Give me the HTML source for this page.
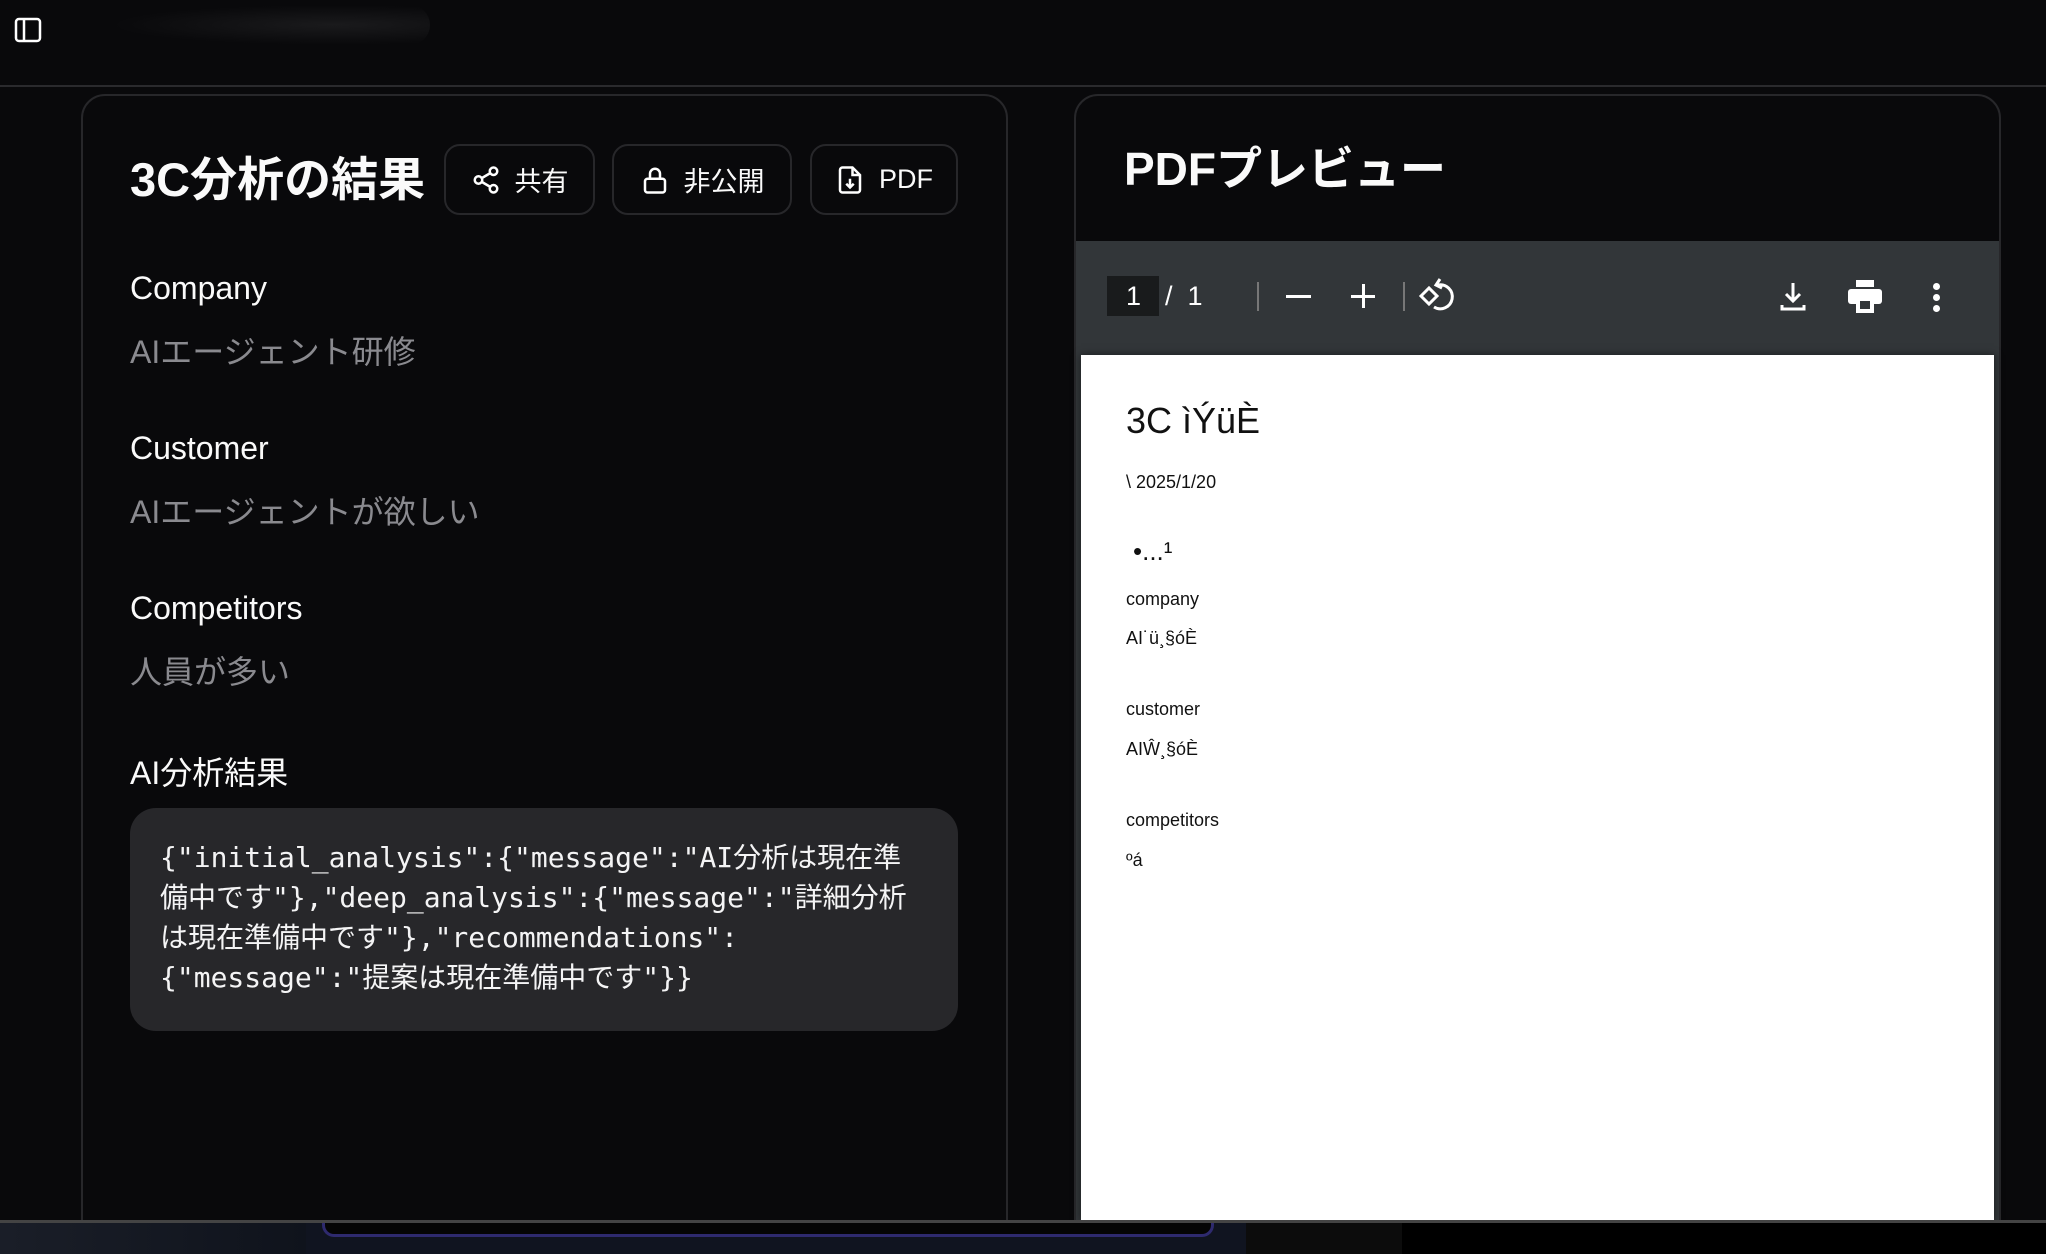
<!DOCTYPE html>
<html style="width:2046px;height:1254px;overflow:hidden"><head><meta charset="utf-8"><style>
*{margin:0;padding:0;box-sizing:border-box}
body{width:2046px;height:1254px;background:#09090b;overflow:hidden;position:relative;font-family:"Liberation Sans","Noto Sans CJK JP",sans-serif;color:#fafafa}
.abs{position:absolute}
.hdr{left:0;top:0;width:2046px;height:87px;border-bottom:2px solid #2a2a2d;background:#09090b}
.card{border:2px solid #27272a;border-radius:24px;background:#09090b}
.btn{border:2px solid #27272a;border-radius:16px;height:71px;top:144px;display:flex;align-items:center;justify-content:center;gap:14px;font-size:27px;color:#fafafa}
.lbl{left:130px;font-size:32px;color:#fafafa}
.val{left:130px;font-size:32px;color:#8a8a8f}
.code{left:130px;top:808px;width:828px;height:223px;background:#27272a;border-radius:26px;padding:30px 30px;font-family:"DejaVu Sans Mono","Noto Sans CJK JP",monospace;font-size:28px;line-height:40px;color:#f4f4f5;word-break:break-all}
.pg{font-family:"Liberation Sans",sans-serif;color:#111;left:1126px}
</style></head><body>
<div class="abs hdr"></div>
<svg class="abs" style="left:14px;top:17px" width="28" height="26" viewBox="0 0 28 26"><rect x="2" y="2" width="24" height="22" rx="3" fill="none" stroke="#fff" stroke-width="2.5"/><line x1="10" y1="2" x2="10" y2="24" stroke="#fff" stroke-width="2.5"/></svg>
<div class="abs" style="left:110px;top:5px;width:320px;height:40px;border-radius:20px;background:radial-gradient(ellipse at 70% 50%,#1a1a1c,#09090b 70%)"></div>

<div class="abs card" style="left:81px;top:94px;width:927px;height:1150px"></div>
<div class="abs" style="left:130px;top:150px;font-size:47px;font-weight:bold;line-height:60px">3C分析の結果</div>
<div class="abs btn" style="left:444px;width:151px"><svg width="30" height="30" viewBox="0 0 24 24" fill="none" stroke="#fff" stroke-width="2"><circle cx="18" cy="5" r="3"/><circle cx="6" cy="12" r="3"/><circle cx="18" cy="19" r="3"/><path d="M8.6 13.5l6.8 4M15.4 6.5l-6.8 4"/></svg>共有</div>
<div class="abs btn" style="left:612px;width:180px"><svg width="30" height="30" viewBox="0 0 24 24" fill="none" stroke="#fff" stroke-width="2"><rect x="4" y="11" width="16" height="11" rx="2"/><path d="M8 11V7a4 4 0 0 1 8 0v4"/></svg>非公開</div>
<div class="abs btn" style="left:810px;width:148px"><svg width="30" height="30" viewBox="0 0 24 24" fill="none" stroke="#fff" stroke-width="2"><path d="M14 2H6a2 2 0 0 0-2 2v16a2 2 0 0 0 2 2h12a2 2 0 0 0 2-2V8z"/><path d="M14 2v6h6M12 11v7M9 15l3 3 3-3"/></svg>PDF</div>

<div class="abs lbl" style="top:270px">Company</div>
<div class="abs val" style="top:327px">AIエージェント研修</div>
<div class="abs lbl" style="top:430px">Customer</div>
<div class="abs val" style="top:487px">AIエージェントが欲しい</div>
<div class="abs lbl" style="top:590px">Competitors</div>
<div class="abs val" style="top:647px">人員が多い</div>
<div class="abs lbl" style="top:748px">AI分析結果</div>
<div class="abs code">{"initial_analysis":{"message":"AI分析は現在準備中です"},"deep_analysis":{"message":"詳細分析は現在準備中です"},"recommendations":<br>{"message":"提案は現在準備中です"}}</div>

<div class="abs card" style="left:1074px;top:94px;width:927px;height:1150px;overflow:hidden">
 <div class="abs" style="left:48px;top:37px;font-size:46px;font-weight:bold">PDFプレビュー</div>
 <div class="abs" style="left:0;top:145px;width:923px;height:1001px;background:#323639"></div>
</div>
<div class="abs" style="left:1107px;top:276px;width:52px;height:40px;background:#191b1c"></div>
<div class="abs" style="left:1126px;top:281px;font-size:27px;color:#fff">1</div>
<div class="abs" style="left:1165px;top:281px;font-size:27px;color:#fff">/&nbsp;&nbsp;1</div>
<div class="abs" style="left:1257px;top:282px;width:2px;height:29px;background:#777"></div>
<div class="abs" style="left:1286px;top:295px;width:25px;height:3px;background:#fff"></div>
<div class="abs" style="left:1351px;top:295px;width:24px;height:3px;background:#fff"></div>
<div class="abs" style="left:1362px;top:284px;width:3px;height:24px;background:#fff"></div>
<div class="abs" style="left:1403px;top:282px;width:2px;height:29px;background:#777"></div>
<svg class="abs" style="left:1418px;top:277px" width="38" height="38" viewBox="0 0 38 38" fill="none" stroke="#fff" stroke-width="3"><path d="M3 19l8-8 8 8-8 8z"/><path d="M20 8a12 12 0 1 1-4 22"/><path d="M22 2l-4 6 6 3" /></svg>
<svg class="abs" style="left:1778px;top:281px" width="30" height="32" viewBox="0 0 30 32" fill="none" stroke="#fff" stroke-width="3"><path d="M15 2v18M8 13l7 7 7-7M4 24v4h22v-4"/></svg>
<svg class="abs" style="left:1848px;top:280px" width="34" height="33" viewBox="0 0 34 33" fill="#fff"><rect x="8" y="0" width="18" height="7"/><rect x="0" y="9" width="34" height="15" rx="3"/><rect x="8" y="18" width="18" height="15"/><rect x="12" y="21" width="10" height="8" fill="#323639"/></svg>
<div class="abs" style="left:1933px;top:283px;width:7px;height:7px;border-radius:50%;background:#fff;box-shadow:0 11px 0 #fff,0 22px 0 #fff"></div>

<div class="abs" style="left:1081px;top:355px;width:913px;height:866px;background:#fff;box-shadow:0 0 8px rgba(0,0,0,.5)"></div>
<div class="abs pg" style="top:400px;font-size:36px">3C ìÝüÈ</div>
<div class="abs pg" style="top:472px;font-size:18px">\ 2025/1/20</div>
<div class="abs pg" style="top:536px;font-size:26px;left:1133px">•...¹</div>
<div class="abs pg" style="top:589px;font-size:18px">company</div>
<div class="abs pg" style="top:628px;font-size:18px">AI˙ü¸§óÈ</div>
<div class="abs pg" style="top:699px;font-size:18px">customer</div>
<div class="abs pg" style="top:739px;font-size:18px">AIŴ¸§óÈ</div>
<div class="abs pg" style="top:810px;font-size:18px">competitors</div>
<div class="abs pg" style="top:850px;font-size:18px">ºá</div>

<div class="abs" style="left:0;top:1220px;width:2046px;height:3px;background:#444"></div>
<div class="abs" style="left:0;top:1223px;width:2046px;height:31px;background:#000"></div>
<div class="abs" style="left:0;top:1223px;width:306px;height:31px;background:linear-gradient(90deg,#1a1e28,#0f131c)"></div>
<div class="abs" style="left:306px;top:1223px;width:940px;height:31px;background:#101420"></div>
<div class="abs" style="left:322px;top:1223px;width:892px;height:14px;background:#050505;border:3px solid #2e2a6e;border-top:none;border-radius:0 0 12px 12px"></div>
<div class="abs" style="left:1246px;top:1223px;width:156px;height:31px;background:#0c0c0c"></div>
</body></html>
